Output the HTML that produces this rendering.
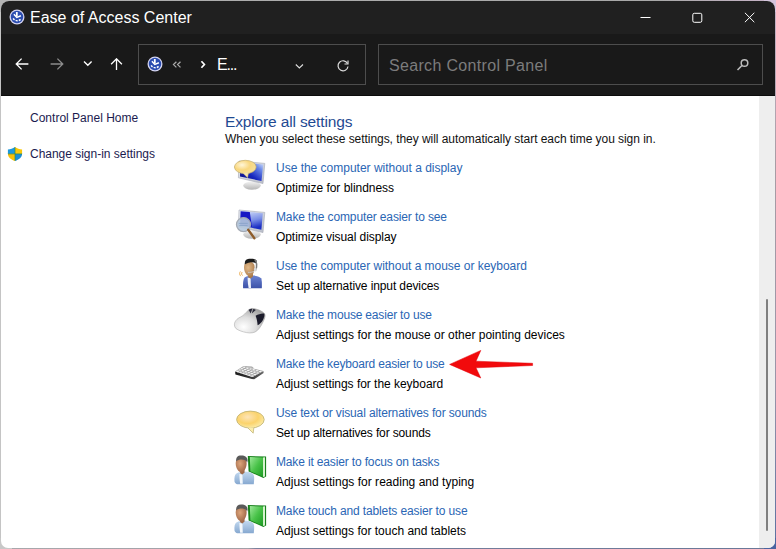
<!DOCTYPE html>
<html><head><meta charset="utf-8">
<style>
html,body{margin:0;padding:0;}
body{width:776px;height:549px;overflow:hidden;position:relative;background:#c4c4c4;font-family:"Liberation Sans",sans-serif;}
.abs{position:absolute;}
#win{position:absolute;left:1px;top:1px;width:774px;height:547px;background:#fff;border-radius:8px 8px 7px 7px;overflow:hidden;}
#title{position:absolute;left:0;top:0;width:774px;height:33px;background:#202020;}
#tool{position:absolute;left:0;top:33px;width:774px;height:61px;background:#191919;border-bottom:1px solid #0c0c0c;}
.t{position:absolute;white-space:pre;line-height:1;}
.lnk{color:#2a66b4;font-size:12px;}
.dsc{color:#000;font-size:12px;}
.nav{color:#1b1b4f;font-size:12px;}
#scroll{position:absolute;left:758px;top:95px;width:16px;height:452px;background:#eeeeee;}
</style></head><body>
<div class="abs" style="left:0;top:0;width:776px;height:1px;background:linear-gradient(90deg,#b0b0b0 0,#a8a8a8 85%,#c8b4c8 100%)"></div>
<div class="abs" style="left:775px;top:0;width:1px;height:549px;background:linear-gradient(180deg,#c8b4c8 0,#a89ca4 30%,#9a94a8 70%,#5a70a0 100%)"></div>
<div class="abs" style="left:0;top:548px;width:776px;height:1px;background:linear-gradient(90deg,#a8a8ac 0,#a0a0a8 32%,#7a809c 33%,#6a7898 100%)"></div>
<div class="abs" style="left:764px;top:538px;width:12px;height:11px;background:#4a64a0"></div>
<div class="abs" style="left:764px;top:0;width:12px;height:12px;background:#d4c4dc"></div>
<div class="abs" style="left:0;top:0;width:12px;height:12px;background:#b4b4b4"></div>
<div class="abs" style="left:0;top:538px;width:12px;height:11px;background:#c8c8c8"></div>
<div id="win">
  <div id="title">
    <svg class="abs" style="left:8px;top:8px" width="16" height="16" viewBox="0 0 16 16">
      <circle cx="8" cy="8" r="7.5" fill="#d4d4f0"/>
      <circle cx="8" cy="8" r="6.2" fill="#2a4cb0"/>
      <path d="M7.8 3v4.6" stroke="#fff" stroke-width="1.8"/>
      <path d="M4.9 5.2 L7.8 8.4 L11.9 6.8" stroke="#fff" stroke-width="1.5" fill="none"/>
      <path d="M4.2 9.4 C5.4 11.8 9.4 12.6 11.8 10.2" stroke="#fff" stroke-width="1.5" stroke-dasharray="2 1.2" fill="none"/>
    </svg>
    <div class="t" style="left:29px;top:9px;font-size:16px;color:#fff;">Ease of Access Center</div>
    <svg class="abs" style="left:639px;top:10px" width="12" height="12"><path d="M0.5 6.5h10" stroke="#fff" stroke-width="1"/></svg>
    <svg class="abs" style="left:690px;top:10px" width="14" height="14"><rect x="1.8" y="2.3" width="9" height="9" rx="1.5" stroke="#fff" stroke-width="1" fill="none"/></svg>
    <svg class="abs" style="left:742px;top:10px" width="14" height="14"><path d="M1.9 1.8L11.3 11.2M11.3 1.8L1.9 11.2" stroke="#fff" stroke-width="1"/></svg>
  </div>
  <div id="tool">
    <svg class="abs" style="left:13px;top:23px" width="16" height="14" viewBox="0 0 16 14"><path d="M14.4 7H2.2M7.6 1.6L2.2 7l5.4 5.4" stroke="#fff" stroke-width="1.3" fill="none"/></svg>
    <svg class="abs" style="left:48px;top:23px" width="16" height="14" viewBox="0 0 16 14"><path d="M1.6 7h12.2M8.4 1.6L13.8 7l-5.4 5.4" stroke="#8c8c8c" stroke-width="1.3" fill="none"/></svg>
    <svg class="abs" style="left:81px;top:26px" width="12" height="8" viewBox="0 0 12 8"><path d="M2 1.6l3.8 3.6 3.8-3.6" stroke="#fff" stroke-width="1.4" fill="none"/></svg>
    <svg class="abs" style="left:109px;top:24px" width="14" height="14" viewBox="0 0 14 14"><path d="M6.5 12V0.8M1.1 6.2l5.4-5.4 5.4 5.4" stroke="#fff" stroke-width="1.3" fill="none"/></svg>
    <div class="abs" style="left:137px;top:10px;width:226px;height:39px;border:1px solid #4d4d4d;"></div>
    <svg class="abs" style="left:146px;top:22px" width="16" height="16" viewBox="0 0 16 16">
      <circle cx="8" cy="8" r="7.5" fill="#d4d4f0"/>
      <circle cx="8" cy="8" r="6.2" fill="#2a4cb0"/>
      <path d="M7.8 3v4.6" stroke="#fff" stroke-width="1.8"/>
      <path d="M4.9 5.2 L7.8 8.4 L11.9 6.8" stroke="#fff" stroke-width="1.5" fill="none"/>
      <path d="M4.2 9.4 C5.4 11.8 9.4 12.6 11.8 10.2" stroke="#fff" stroke-width="1.5" stroke-dasharray="2 1.2" fill="none"/>
    </svg>
    <svg class="abs" style="left:170px;top:26px" width="12" height="9" viewBox="0 0 12 9"><path d="M5.4 1.8L2.5 4.6l2.9 2.8M9.5 1.8L6.6 4.6l2.9 2.8" stroke="#a8a8a8" stroke-width="1.3" fill="none"/></svg>
    <svg class="abs" style="left:198px;top:26px" width="8" height="10" viewBox="0 0 8 10"><path d="M2.4 1.2l3 3.3-3 3.3" stroke="#fff" stroke-width="1.7" fill="none"/></svg>
    <div class="t" style="left:216px;top:23px;font-size:16px;color:#fff;letter-spacing:-1.2px">E...</div>
    <svg class="abs" style="left:293px;top:29px" width="12" height="8" viewBox="0 0 12 8"><path d="M1.8 1.5l3.6 3.4 3.6-3.4" stroke="#ddd" stroke-width="1.1" fill="none"/></svg>
    <svg class="abs" style="left:335px;top:25px" width="14" height="14" viewBox="0 0 14 14"><path d="M11.5 4.5A5 5 0 1 0 12 7.5" stroke="#ddd" stroke-width="1.2" fill="none"/><path d="M12 1.5v3.5H8.5" stroke="#ddd" stroke-width="1.2" fill="none"/></svg>
    <div class="abs" style="left:377px;top:10px;width:383px;height:39px;border:1px solid #4d4d4d;"></div>
    <div class="t" style="left:388px;top:24px;font-size:16px;color:#7c7c7c;letter-spacing:0.33px">Search Control Panel</div>
    <svg class="abs" style="left:735px;top:24px" width="14" height="14" viewBox="0 0 14 14"><circle cx="8.5" cy="5" r="3.3" stroke="#bbb" stroke-width="1.5" fill="none"/><path d="M6.2 7.3L1.5 12" stroke="#bbb" stroke-width="1.6"/></svg>
  </div>
  <div id="content">
    <div class="t nav" style="left:29px;top:111px;letter-spacing:0.01px">Control Panel Home</div>
    <svg class="abs" style="left:6px;top:145px" width="16" height="16" viewBox="0 0 16 16">
      <defs><clipPath id="shc"><path d="M0.9 3.6 C3.6 3.2 5.8 2.2 8 0.9 C10.2 2.2 12.4 3.2 15.1 3.6 L15.1 7.8 C15.1 11.2 12 13.8 8 15 C4 13.8 0.9 11.2 0.9 7.8z"/></clipPath></defs>
      <g clip-path="url(#shc)">
        <rect x="0" y="0" width="8" height="7.9" fill="#1c98dc"/>
        <rect x="8" y="0" width="8" height="7.9" fill="#f8c80a"/>
        <rect x="0" y="7.9" width="8" height="8" fill="#f8c00a"/>
        <rect x="8" y="7.9" width="8" height="8" fill="#1a8ed6"/>
        <path d="M8 0v16M0 7.9h16" stroke="#3e8a3a" stroke-width=".7"/>
      </g>
    </svg>
    <div class="t nav" style="left:29px;top:147px;letter-spacing:-0.02px">Change sign-in settings</div>

    <div class="t" style="left:224px;top:112.6px;font-size:15.5px;color:#1f4a92;letter-spacing:-0.14px;">Explore all settings</div>
    <div class="t dsc" style="left:224px;top:132px;letter-spacing:-0.05px;color:#111">When you select these settings, they will automatically start each time you sign in.</div>

    <div class="t lnk" style="left:275px;top:161px;letter-spacing:-0.01px">Use the computer without a display</div>
    <div class="t dsc" style="left:275px;top:181px;letter-spacing:-0.03px">Optimize for blindness</div>
    <div class="t lnk" style="left:275px;top:210px;letter-spacing:-0.125px">Make the computer easier to see</div>
    <div class="t dsc" style="left:275px;top:230px;letter-spacing:-0.07px">Optimize visual display</div>
    <div class="t lnk" style="left:275px;top:259px;letter-spacing:-0.03px">Use the computer without a mouse or keyboard</div>
    <div class="t dsc" style="left:275px;top:279px;letter-spacing:-0.11px">Set up alternative input devices</div>
    <div class="t lnk" style="left:275px;top:308px;letter-spacing:-0.18px">Make the mouse easier to use</div>
    <div class="t dsc" style="left:275px;top:328px;letter-spacing:0px">Adjust settings for the mouse or other pointing devices</div>
    <div class="t lnk" style="left:275px;top:357px;letter-spacing:-0.18px">Make the keyboard easier to use</div>
    <div class="t dsc" style="left:275px;top:377px;letter-spacing:-0.03px">Adjust settings for the keyboard</div>
    <div class="t lnk" style="left:275px;top:406px;letter-spacing:-0.13px">Use text or visual alternatives for sounds</div>
    <div class="t dsc" style="left:275px;top:426px;letter-spacing:-0.14px">Set up alternatives for sounds</div>
    <div class="t lnk" style="left:275px;top:455px;letter-spacing:-0.15px">Make it easier to focus on tasks</div>
    <div class="t dsc" style="left:275px;top:475px;letter-spacing:0.02px">Adjust settings for reading and typing</div>
    <div class="t lnk" style="left:275px;top:504px;letter-spacing:-0.13px">Make touch and tablets easier to use</div>
    <div class="t dsc" style="left:275px;top:524px;letter-spacing:0px">Adjust settings for touch and tablets</div>
  </div>
<div id="icons">
<svg width="0" height="0" style="position:absolute">
<defs>
  <linearGradient id="gStand" x1="0" y1="0" x2="0" y2="1"><stop offset="0" stop-color="#f4f4f4"/><stop offset="1" stop-color="#b4b4b4"/></linearGradient>
  <linearGradient id="gFrame" x1="0" y1="0" x2="1" y2="1"><stop offset="0" stop-color="#e8ecf4"/><stop offset="1" stop-color="#b8bcc8"/></linearGradient>
  <linearGradient id="gScr1" x1="0" y1="1" x2="1" y2="0"><stop offset="0" stop-color="#06066e"/><stop offset=".4" stop-color="#1828c0"/><stop offset=".75" stop-color="#6a88e8"/><stop offset="1" stop-color="#dce8fc"/></linearGradient>
  <linearGradient id="gScr2" x1="0" y1="0" x2="0.3" y2="1"><stop offset="0" stop-color="#dce6fb"/><stop offset=".6" stop-color="#7a8fe6"/><stop offset="1" stop-color="#1c2fc4"/></linearGradient>
  <radialGradient id="gBub" cx=".35" cy=".35" r=".75"><stop offset="0" stop-color="#fff6d8"/><stop offset=".5" stop-color="#f9d77e"/><stop offset="1" stop-color="#f3e2a2"/></radialGradient>
  <radialGradient id="gBub2" cx=".4" cy=".35" r=".7"><stop offset="0" stop-color="#fde4b8"/><stop offset=".55" stop-color="#fbd36c"/><stop offset="1" stop-color="#fbeeae"/></radialGradient>
  <radialGradient id="gFace" cx=".4" cy=".4" r=".7"><stop offset="0" stop-color="#e2b988"/><stop offset="1" stop-color="#a97a4c"/></radialGradient>
  <radialGradient id="gFace2" cx=".4" cy=".4" r=".7"><stop offset="0" stop-color="#dca47a"/><stop offset="1" stop-color="#9a6244"/></radialGradient>
  <linearGradient id="gBlue" x1="0" y1="0" x2="0" y2="1"><stop offset="0" stop-color="#6a82d2"/><stop offset="1" stop-color="#3c52a8"/></linearGradient>
  <linearGradient id="gLBlue" x1="0" y1="0" x2="0" y2="1"><stop offset="0" stop-color="#c4daf0"/><stop offset="1" stop-color="#86a8d0"/></linearGradient>
  <linearGradient id="gBook" x1="0" y1="0" x2="1" y2="1"><stop offset="0" stop-color="#9ee89a"/><stop offset=".5" stop-color="#48c248"/><stop offset="1" stop-color="#1c9a22"/></linearGradient>
  <radialGradient id="gMouse" cx=".3" cy=".75" r=".8"><stop offset="0" stop-color="#ffffff"/><stop offset=".5" stop-color="#dedede"/><stop offset="1" stop-color="#a4a4a4"/></radialGradient>
  <linearGradient id="gKey" x1="0" y1="0" x2="1" y2="1"><stop offset="0" stop-color="#c8c8c8"/><stop offset="1" stop-color="#8c8c8c"/></linearGradient>

  <g id="monitor">
    <ellipse cx="22" cy="29.6" rx="8.8" ry="4.2" fill="url(#gStand)"/>
    <path d="M9 5 L34.8 7.4 L33 27.6 L8.4 21.8z" fill="url(#gFrame)" stroke="#a6aab6" stroke-width=".6"/>
  </g>
</defs>
</svg>

<!-- icon1 -->
<svg class="abs" style="left:229px;top:155px" width="40" height="40" viewBox="0 0 40 40">
  <use href="#monitor"/>
  <path d="M10.4 6.4 L33.2 8.4 L31.5 25 L10 20.4z" fill="url(#gScr1)"/>
  <ellipse cx="15.3" cy="11" rx="10.9" ry="6.7" fill="url(#gBub)" stroke="#c2ac6c" stroke-width=".7"/>
  <path d="M12.8 17.2 L17.6 21.8 L18.6 16.8z" fill="#f3e4ae"/>
  <path d="M13.4 17.4 L17.6 21.8 L18.4 17" fill="none" stroke="#c2ac6c" stroke-width=".5"/>
</svg>
<!-- icon2 -->
<svg class="abs" style="left:229px;top:204px" width="40" height="40" viewBox="0 0 40 40">
  <use href="#monitor"/>
  <path d="M10.6 6.2 L32.8 8.2 L31.4 24.8 L10.2 20.2z" fill="url(#gScr2)"/>
  <path d="M10.6 6.2 L19.8 7 L22 22 L10.2 20.2z" fill="#1818c4"/>
  <circle cx="13.5" cy="19.6" r="7" fill="#b4c6dc" fill-opacity=".9" stroke="#a4aab4" stroke-width="1.3"/>
  <path d="M8.8 18.4h9M9.2 20.6h8.4" stroke="#8aa4c8" stroke-width=".9"/>
  <path d="M18.2 24.8 L24.4 33.2" stroke="#8e5c2a" stroke-width="2.3" stroke-linecap="round"/>
</svg>
<!-- icon3 -->
<svg class="abs" style="left:229px;top:253px" width="40" height="40" viewBox="0 0 40 40">
  <path d="M10.4 17.4 C9.2 18.8 9.4 20.8 10.8 22.2 M12.2 18 C11.2 19.2 11.4 20.6 12.6 21.6" stroke="#eaa848" stroke-width=".9" fill="none"/>
  <path d="M13.1 34 C12.9 30 13 25.6 14.6 23.6 C15.8 22.6 17.2 22.2 18.4 22 L22.6 21.6 C26 21.6 29.2 22.2 31 24.2 C32 25.6 32 30 31.8 34.2 L13.2 34.2z" fill="url(#gBlue)"/>
  <path d="M17.6 23.4 L20.6 24.2 L21 34 L18.6 34 C18 30 17.6 27 17.6 23.4z" fill="#eef2fa"/>
  <path d="M17.8 19.4 L18.2 23.2 L20.6 24.6 L23 22.6 L22.8 19z" fill="#a87a4a"/>
  <path d="M14 13.6 C14 9 16.4 7.8 19.4 7.8 C22.6 7.8 24.6 9.6 24.6 13.4 C24.6 17.6 22.4 22.4 19.8 22.4 C16.8 22.4 14 18 14 13.6z" fill="url(#gFace)"/>
  <path d="M14.8 10.4 C14.4 7 16 5 19 4.8 C22 4.4 25.4 4.6 26.6 6.6 L26.4 9.6 C24.6 8.4 22.4 8 20 8.4 C18 8.6 16.2 9.2 14.8 10.4z" fill="#1a1a1a"/>
  <path d="M24.8 5.8 C26.6 7.6 27 11.6 26 16" stroke="#7a7a7a" stroke-width="1.5" fill="none"/>
  <ellipse cx="25.4" cy="15.6" rx="1.5" ry="1.9" fill="#d8d8d8"/>
  <path d="M24.4 17 C22.6 18.2 20 18.6 18 18.4" stroke="#c8c8c8" stroke-width=".9" fill="none"/>
</svg>
<!-- icon4 -->
<svg class="abs" style="left:229px;top:302px" width="40" height="40" viewBox="0 0 40 40">
  <path d="M4.4 21.9 C4.2 18.6 7 15.6 10.2 14.2 C13.6 12.6 16 9.6 18.2 7.2 C20 5.6 22 5.2 24 5.6 C28 6.2 32.4 8.2 34.4 10.4 C35.6 12 35.2 14.2 34.2 16.4 C32.6 20 30.6 24.4 27.4 27.4 C24.6 30 20.6 30.4 16.6 29.6 C12.4 28.8 8.4 27.4 6 25.6 C5 24.6 4.5 23.4 4.4 21.9z" fill="url(#gMouse)" stroke="#a0a0a0" stroke-width=".5"/>
  <path d="M25.6 12.8 C28.4 11.2 31.6 10.2 34.2 10.6 C34.8 12 34.2 14.6 32.8 17.2 C31.4 19.6 29.6 21.4 27.6 22.2 C27.4 19 26.8 15.6 25.6 12.8z" fill="#1c1c2c"/>
  <path d="M18.6 6.8 C19.8 5.9 21 5.6 22.4 5.7 L20.6 10.4 C20 9 19.2 7.8 18.6 6.8z" fill="#2a2a3a"/>
  <path d="M23.2 5.9 C24.2 6 25.2 6.4 25.8 7 L21.8 10.6z" fill="#2a2a3a"/>
</svg>
<!-- icon5 -->
<svg class="abs" style="left:229px;top:351px" width="40" height="40" viewBox="0 0 40 40">
  <linearGradient id="gKbd" x1="0" y1="0" x2="1" y2="0"><stop offset="0" stop-color="#1a1a1a"/><stop offset=".6" stop-color="#3a3a3a"/><stop offset="1" stop-color="#6a6a6a"/></linearGradient>
  <path d="M5.1 19.5 L22.4 25.1 L33.4 19.1 L33.6 20.9 L24.2 27.2 L21.8 27.1 L5.4 22.6z" fill="url(#gKbd)"/>
  <path d="M5.1 19.5 L13.5 14.1 L33.4 19.1 L22.4 25.1z" fill="#9c9c9c"/>
  <path d="M12.8 14.6 L13.5 14.1 L22 14.5 L24 16.2z" fill="#a8a8a8"/>
  <path d="M5.94 19.54L7.96 20.19L9.48 19.23L7.41 18.59zM8.03 18.18L10.12 18.82L11.64 17.86L9.50 17.24zM10.12 16.83L12.29 17.45L13.80 16.49L11.59 15.88zM12.22 15.48L14.45 16.07L15.97 15.11L13.68 14.53zM8.83 20.47L10.84 21.12L12.43 20.14L10.36 19.50zM11.02 19.09L13.11 19.72L14.70 18.74L12.56 18.12zM13.22 17.71L15.38 18.32L16.97 17.35L14.75 16.74zM15.41 16.33L17.65 16.93L19.23 15.95L16.95 15.37zM11.71 21.40L13.73 22.05L15.39 21.05L13.32 20.41zM14.01 19.99L16.10 20.63L17.76 19.63L15.62 19.01zM16.31 18.59L18.47 19.20L20.13 18.21L17.92 17.61zM18.61 17.18L20.84 17.78L22.50 16.79L20.21 16.20zM14.59 22.33L16.61 22.98L18.34 21.96L16.27 21.33zM16.99 20.90L19.08 21.53L20.82 20.52L18.68 19.90zM19.40 19.47L21.56 20.08L23.29 19.07L21.080 18.47zM21.80 18.04L24.04 18.64L25.77 17.63L23.48 17.04zM17.47 23.26L19.49 23.91L21.30 22.88L19.23 22.24zM19.98 21.80L22.07 22.43L23.88 21.40L21.74 20.78zM22.49 20.35L24.65 20.96L26.46 19.93L24.24 19.33zM24.99 18.89L27.23 19.49L29.04 18.46L26.75 17.88zM20.36 24.18L22.37 24.84L24.25 23.79L22.18 23.15zM22.97 22.71L25.06 23.34L26.94 22.29L24.79 21.67zM25.58 21.23L27.74 21.84L29.62 20.80L27.41 20.19zM28.19 19.75L30.43 20.35L32.30 19.30L30.02 18.71z" fill="#f6f6f6"/>
</svg>
<!-- icon6 -->
<svg class="abs" style="left:229px;top:400px" width="40" height="40" viewBox="0 0 40 40">
  <ellipse cx="20.4" cy="18.6" rx="13.8" ry="8.5" fill="url(#gBub2)" stroke="#bcae6e" stroke-width=".8"/>
  <path d="M17.4 26.4 L23.2 32.2 L23.8 26.6z" fill="#fbeeae"/>
  <path d="M17.8 26.8 L23.2 32.2 L23.8 27" fill="none" stroke="#bcae6e" stroke-width=".7"/>
</svg>
<!-- icon7 -->
<svg class="abs" style="left:229px;top:449px" width="40" height="40" viewBox="0 0 40 40">
  <path d="M17.8 6 L36.1 6.4 L36.1 26.6 L33.4 28 L18.6 21.4z" fill="#17801b"/>
  <path d="M19.8 7 L33 7.5 L33 27 L20.4 21.2z" fill="url(#gBook)"/>
  <path d="M33 7.5 L35 7.3 L35 26.4 L33 27z" fill="#d4f2cc"/>
  <path d="M4.5 31.4 C4.2 27.6 4.6 25 6.4 23.6 C7.6 22.6 9 22.2 10.4 22 L14.4 21.6 C18 21.6 21.6 22.4 23.4 24.4 C24.6 26 24.2 30.6 23.8 34.2 L7 34.2 C5.6 33.6 4.6 32.6 4.5 31.4z" fill="url(#gLBlue)"/>
  <path d="M9.4 24 L12.4 24.6 L12.8 33.8 L10.2 33.8 C9.6 30 9.4 27 9.4 24z" fill="#f4f8fc"/>
  <path d="M9.8 19.4 L10.2 23.2 L12.4 24.6 L14.6 22.4 L14.4 19z" fill="#a06a48"/>
  <path d="M5.7 13.6 C5.7 9 8 7.8 11 7.8 C14.2 7.8 16.6 9.6 16.6 13.4 C16.6 17.6 14 22.4 11.2 22.4 C8.4 22.4 5.7 18 5.7 13.6z" fill="url(#gFace2)"/>
  <path d="M6.2 11.2 C5.8 7.4 7.6 5.4 11 5.4 C14.6 5.2 17.6 6.8 17.6 10.4 L17.2 12.6 C16.4 10.6 14.4 9.4 11.6 9.4 C9.4 9.4 7.4 10 6.2 11.2z" fill="#5a5a5a"/>
</svg>
<!-- icon8 -->
<svg class="abs" style="left:229px;top:498px" width="40" height="40" viewBox="0 0 40 40">
  <path d="M17.8 6 L36.1 6.4 L36.1 26.6 L33.4 28 L18.6 21.4z" fill="#17801b"/>
  <path d="M19.8 7 L33 7.5 L33 27 L20.4 21.2z" fill="url(#gBook)"/>
  <path d="M33 7.5 L35 7.3 L35 26.4 L33 27z" fill="#d4f2cc"/>
  <path d="M4.5 31.4 C4.2 27.6 4.6 25 6.4 23.6 C7.6 22.6 9 22.2 10.4 22 L14.4 21.6 C18 21.6 21.6 22.4 23.4 24.4 C24.6 26 24.2 30.6 23.8 34.2 L7 34.2 C5.6 33.6 4.6 32.6 4.5 31.4z" fill="url(#gLBlue)"/>
  <path d="M9.4 24 L12.4 24.6 L12.8 33.8 L10.2 33.8 C9.6 30 9.4 27 9.4 24z" fill="#f4f8fc"/>
  <path d="M9.8 19.4 L10.2 23.2 L12.4 24.6 L14.6 22.4 L14.4 19z" fill="#a06a48"/>
  <path d="M5.7 13.6 C5.7 9 8 7.8 11 7.8 C14.2 7.8 16.6 9.6 16.6 13.4 C16.6 17.6 14 22.4 11.2 22.4 C8.4 22.4 5.7 18 5.7 13.6z" fill="url(#gFace2)"/>
  <path d="M6.2 11.2 C5.8 7.4 7.6 5.4 11 5.4 C14.6 5.2 17.6 6.8 17.6 10.4 L17.2 12.6 C16.4 10.6 14.4 9.4 11.6 9.4 C9.4 9.4 7.4 10 6.2 11.2z" fill="#5a5a5a"/>
</svg>
<!-- red arrow -->
<svg class="abs" style="left:439px;top:339px" width="100" height="50" viewBox="0 0 100 50">
  <path d="M9.6 24.4 L40.8 10.4 L36 21.2 L92.6 23.3 L92.6 25.5 L36 27.8 L40.8 38z" fill="#f20a0c" stroke="#e00008" stroke-width=".5" stroke-linejoin="miter"/>
</svg>
</div>
  <div id="scroll"><div class="abs" style="left:7px;top:203px;width:2px;height:232px;background:#808080;border-radius:1px;"></div></div>
</div>
</body></html>
